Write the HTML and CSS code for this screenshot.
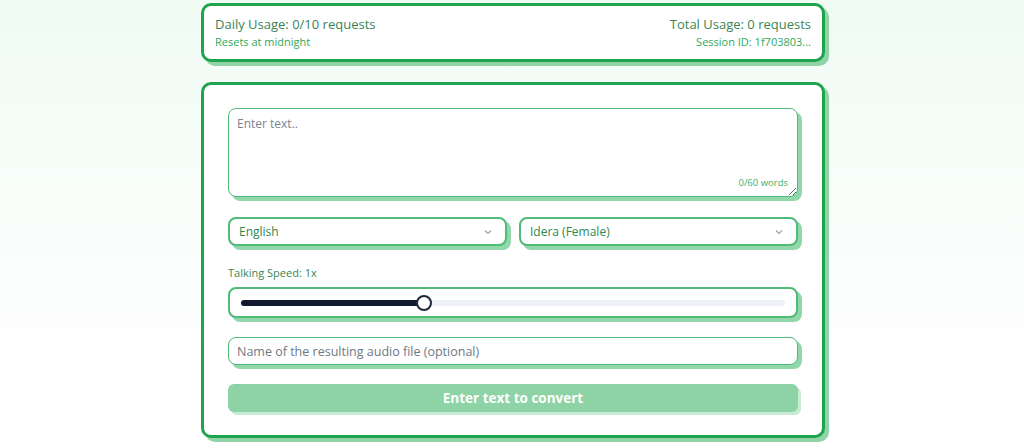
FILE: index.html
```html
<!DOCTYPE html>
<html lang="en">
<head>
  <meta charset="UTF-8" />
  <title>Text to Speech</title>
  <link rel="stylesheet" href="styles.css">
</head>
<body>
  <div class="wrap">
    <div class="card usage">
      <div class="usage-col">
        <div class="usage-main">Daily Usage: 0/10 requests</div>
        <div class="usage-sub">Resets at midnight</div>
      </div>
      <div class="usage-col right">
        <div class="usage-main">Total Usage: 0 requests</div>
        <div class="usage-sub">Session ID: 1f703803...</div>
      </div>
    </div>

    <div class="card form">
      <div class="text-box field">
        <textarea placeholder="Enter text.."></textarea>
        <span class="word-count">0/60 words</span>
      </div>

      <div class="selects">
        <div class="select field">
          <span>English</span>
          <svg width="10" height="10" viewBox="0 0 10 10"><path d="M2 3.5 L5 6.5 L8 3.5" fill="none" stroke="#9ca3af" stroke-width="1.2"/></svg>
        </div>
        <div class="select field">
          <span>Idera (Female)</span>
          <svg width="10" height="10" viewBox="0 0 10 10"><path d="M2 3.5 L5 6.5 L8 3.5" fill="none" stroke="#9ca3af" stroke-width="1.2"/></svg>
        </div>
      </div>

      <div class="speed-label">Talking Speed: 1x</div>
      <div class="slider-box field">
        <div class="track">
          <div class="fill" style="width: 33.6%"></div>
          <div class="thumb" style="left: 33.6%"></div>
        </div>
      </div>

      <input class="name-input field" type="text" placeholder="Name of the resulting audio file (optional)" />

      <button class="convert-btn" disabled>Enter text to convert</button>
    </div>
  </div>
</body>
</html>
```

FILE: styles.css
```css
body {
  margin: 0;
  font-family: "Open Sans", "Noto Sans", sans-serif;
  background: linear-gradient(to bottom, #f0fbf4 0%, #ffffff 85%);
  min-height: 448px;
}
.wrap {
  width: 624px;
  margin: 0 auto;
  padding-top: 3px;
  display: flex;
  flex-direction: column;
  gap: 20px;
  position: relative;
  left: 1px;
}
.card {
  background: #fff;
  border: 3px solid #1ea34e;
  border-radius: 10px;
  box-shadow: 4px 4px 0 #8fd3a7;
}
.usage {
  display: flex;
  justify-content: space-between;
  padding: 8px 11px 9px;
}
.usage-col.right {
  text-align: right;
}
.usage-main {
  font-size: 13px;
  color: #3a8456;
  line-height: 20px;
}
.usage-sub {
  font-size: 11px;
  color: #2fa95c;
  line-height: 16px;
}
.form {
  padding: 23px 24px 23px;
  display: flex;
  flex-direction: column;
}
.field {
  box-sizing: border-box;
  border: 2px solid #4fbb76;
  border-radius: 8px;
  background: #fff;
  box-shadow: 4px 4px 0 #92d6ab;
}
.text-box {
  position: relative;
  height: 89px;
  border-width: 1.5px;
}
.text-box textarea {
  width: 100%;
  height: 100%;
  box-sizing: border-box;
  border: none;
  outline: none;
  resize: both;
  background: transparent;
  padding: 6px 8px;
  font-family: inherit;
  font-size: 12px;
  color: #374151;
}
.text-box textarea::placeholder {
  color: #7b8494;
}
.word-count {
  position: absolute;
  right: 9px;
  bottom: 7px;
  font-size: 9.5px;
  color: #3fae68;
}
.selects {
  margin-top: 20px;
  display: flex;
  gap: 12px;
}
.select {
  flex: 1;
  height: 29px;
  display: flex;
  align-items: center;
  justify-content: space-between;
  padding: 0 12px 0 9px;
  font-size: 12px;
  color: #2c8a52;
}
.speed-label {
  margin-top: 19px;
  font-size: 11px;
  color: #3a8456;
  line-height: 15px;
}
.slider-box {
  margin-top: 7px;
  height: 31px;
  padding: 0 11px;
  display: flex;
  align-items: center;
}
.track {
  position: relative;
  flex: 1;
  height: 6px;
  background: #eef0f7;
  border-radius: 3px;
}
.fill {
  height: 100%;
  background: #111a2e;
  border-radius: 3px;
}
.thumb {
  position: absolute;
  top: 50%;
  width: 12px;
  height: 12px;
  margin: -8px 0 0 -8px;
  border: 2px solid #1f2937;
  border-radius: 50%;
  background: #fff;
}
.name-input {
  margin-top: 19px;
  height: 28px;
  border-width: 1.5px;
  padding: 0 8px;
  font-family: inherit;
  font-size: 12.5px;
  outline: none;
}
.name-input::placeholder {
  color: #6f7786;
}
.convert-btn {
  margin-top: 19px;
  height: 28px;
  border: none;
  border-radius: 6px;
  background: #8dd3a5;
  box-shadow: 3px 3px 0 #c8ebd4;
  color: #fff;
  font-family: inherit;
  font-weight: 700;
  font-size: 13.5px;
}
```
